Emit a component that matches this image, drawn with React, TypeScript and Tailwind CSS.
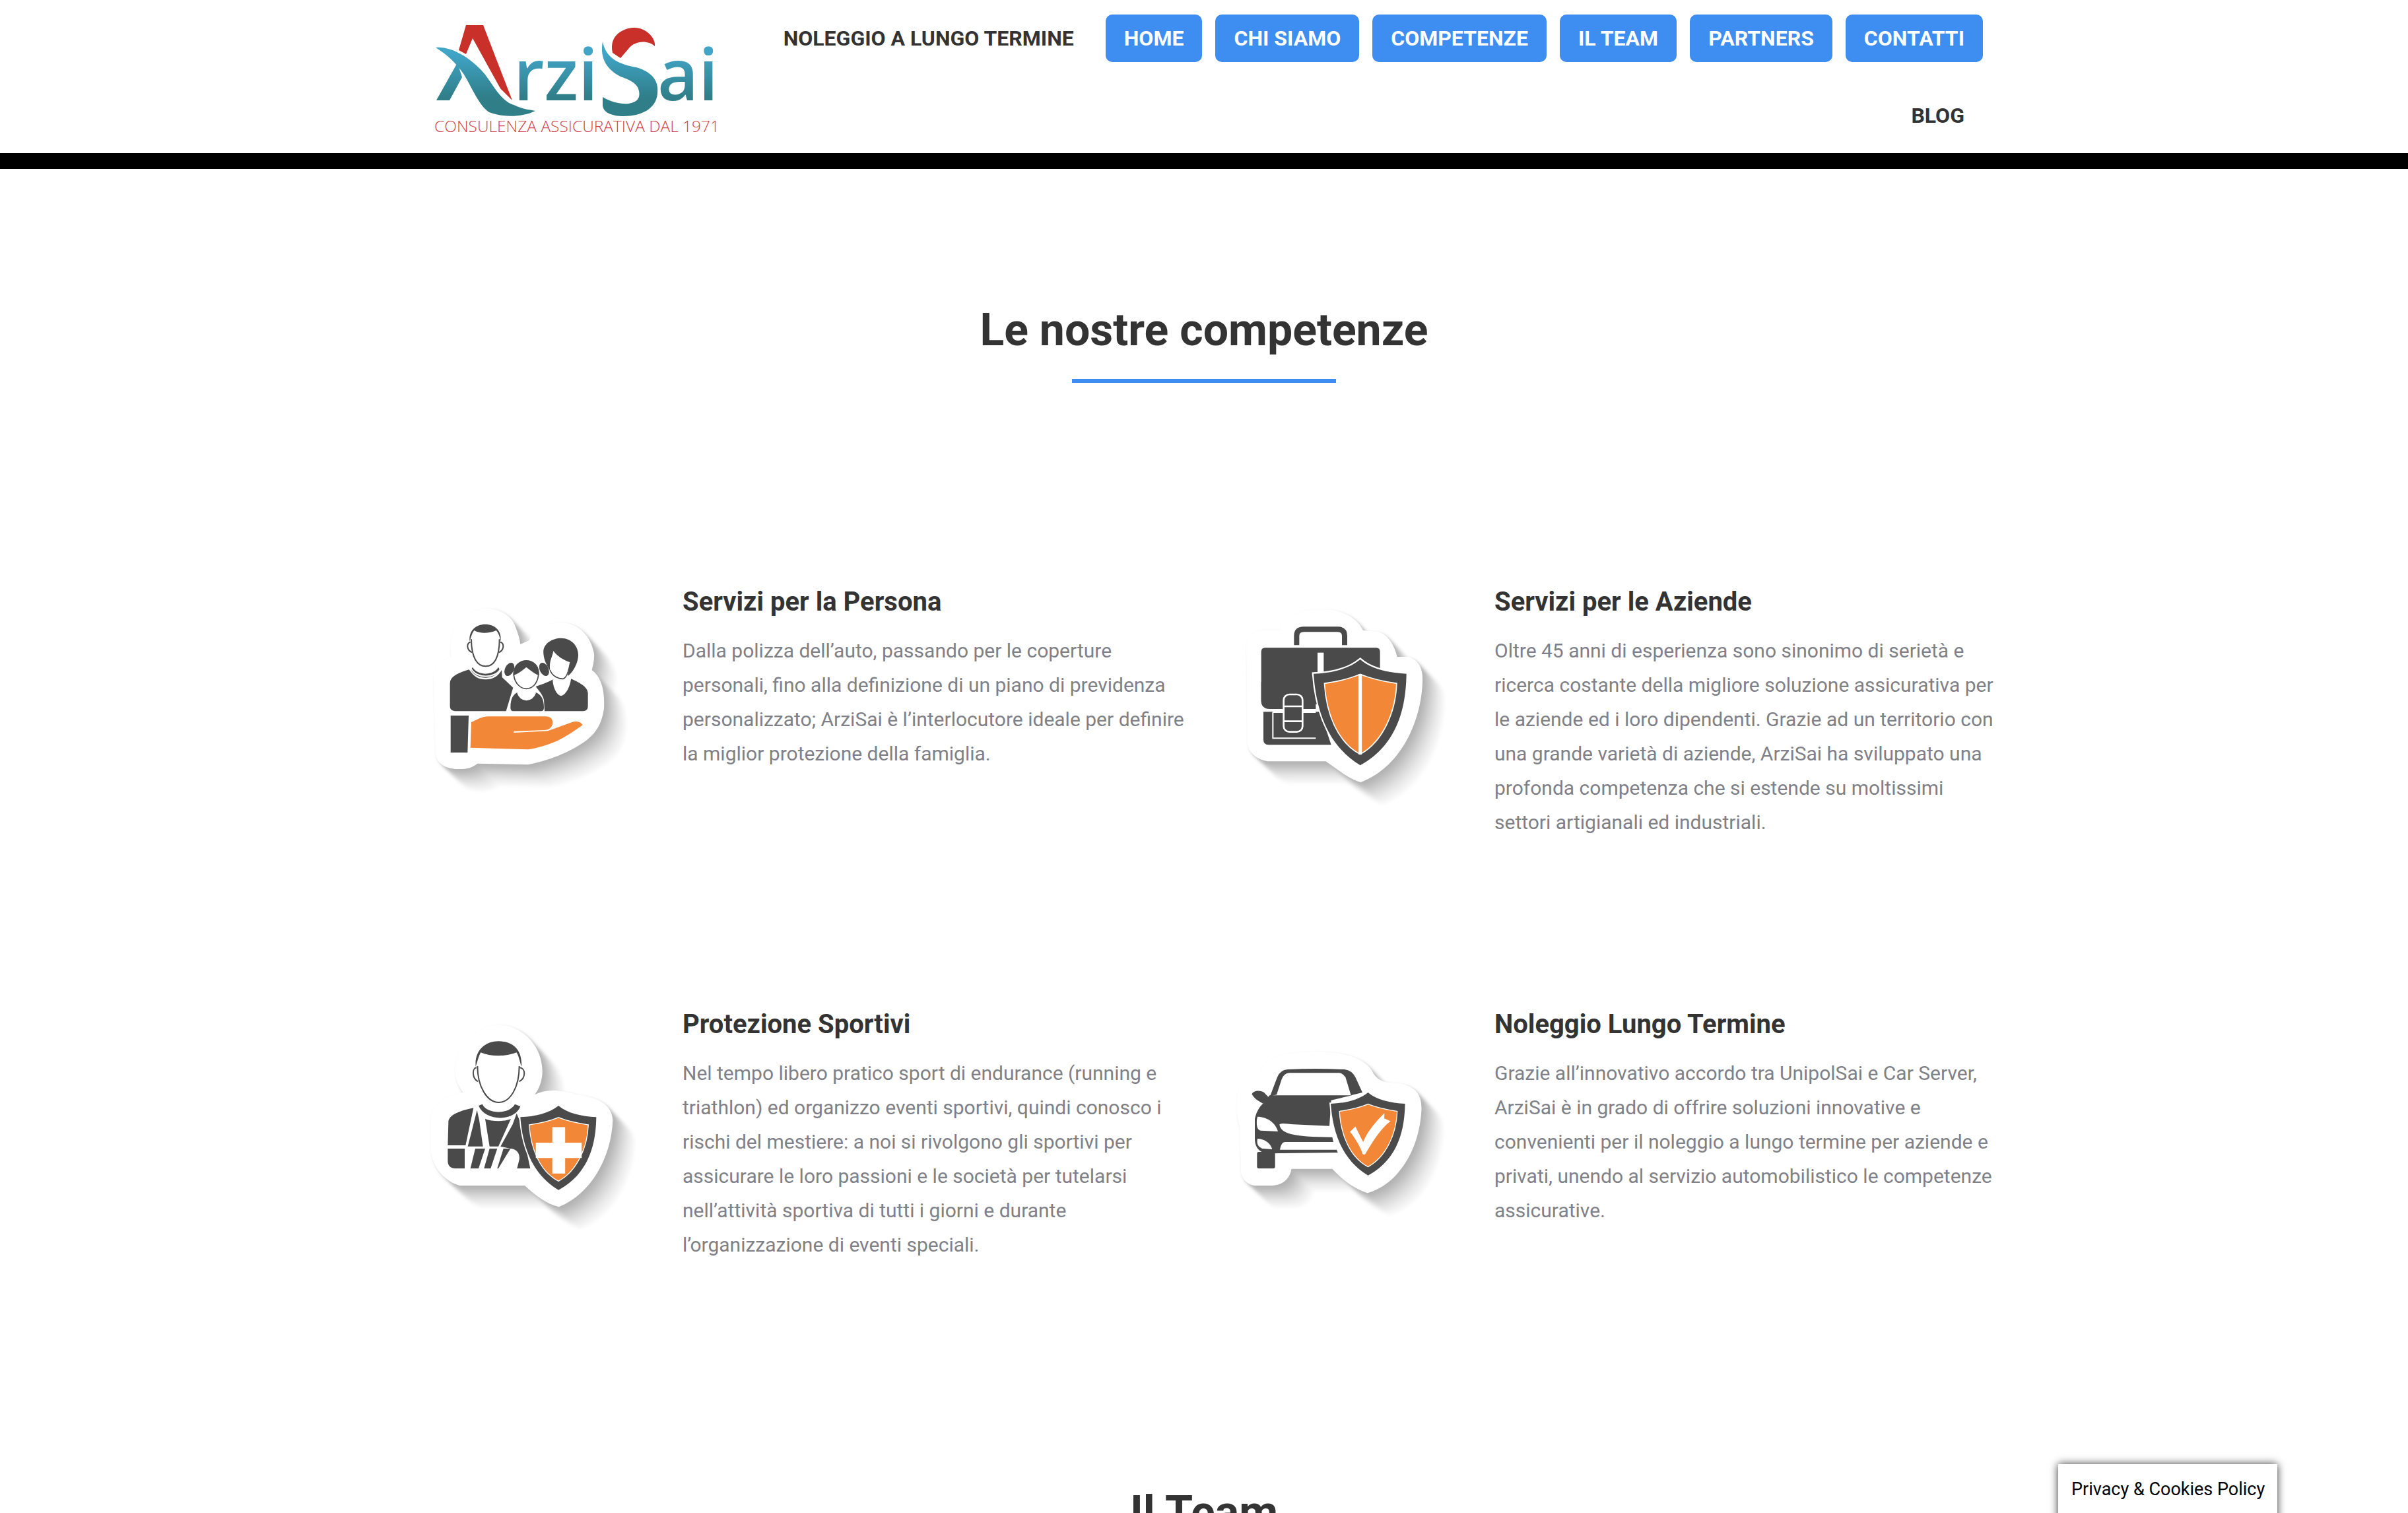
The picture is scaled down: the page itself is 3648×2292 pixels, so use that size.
import React from "react";

const DARK = "#4a4a4a";
const ORANGE = "#f28737";

const SHADOW_STEPS = [
  [100, "#f7f7f7"],
  [90, "#f2f2f2"],
  [80, "#ececec"],
  [70, "#e5e5e5"],
  [60, "#dedede"],
  [50, "#d6d6d6"],
  [40, "#cdcdcd"],
  [30, "#c4c4c4"],
  [20, "#bbbbbb"],
  [10, "#b3b3b3"],
] as const;

function Sticker({ blob, children, dx = 0 }: { blob: string; children: React.ReactNode; dx?: number }) {
  return (
    <svg width="394" height="330" viewBox={`${dx * 3} 0 1182 990`} className="block shrink-0 overflow-visible">
      <defs>
        <filter id="soft" x="-20%" y="-20%" width="140%" height="140%">
          <feGaussianBlur stdDeviation="8" />
        </filter>
      </defs>
      <g filter="url(#soft)">
        {SHADOW_STEPS.map(([o, c]) => (
          <path key={o} d={blob} fill={c} transform={`translate(${o} ${o})`} />
        ))}
      </g>
      <path d={blob} fill="#ffffff" />
      {children}
    </svg>
  );
}

function Shield({ x, y, sx, sy, divided, children }: { x: number; y: number; sx: number; sy: number; divided?: boolean; children?: React.ReactNode }) {
  return (
    <g transform={`translate(${x} ${y}) scale(${sx} ${sy})`}>
      <path d="M0,65 C80,63 160,43 212,0 C260,43 340,61 422,65 C420,203 390,383 212,481 C50,383 10,203 0,65Z" fill={DARK} stroke="#fff" strokeWidth="14" paintOrder="stroke" />
      <path d="M52,111 C110,103 170,88 212,70 C255,88 320,103 375,111 C370,243 310,373 212,428 C110,373 60,243 52,111Z" fill={ORANGE} stroke="#fff" strokeWidth="10" paintOrder="stroke" />
      {divided && <path d="M212,66 V432" stroke="#fff" strokeWidth="15" />}
      {children}
    </g>
  );
}

function FamilyIcon() {
  return (
    <Sticker blob="M60,720 L50,370 C60,325 90,300 132,285 C125,240 125,200 150,150 C180,95 240,65 300,65 C350,70 390,90 415,130 C430,165 442,200 445,228 L485,210 C510,160 570,130 640,130 C710,135 765,190 780,270 C782,300 775,325 770,345 C810,375 830,430 825,520 C815,590 790,630 745,665 C680,710 600,750 480,775 L250,770 C225,790 200,797 150,795 C90,790 62,760 60,720Z">
      <g fill={DARK}>
        <path d="M215,215 C208,165 245,137 285,137 C328,137 362,165 355,215 C352,195 345,175 335,165 C300,180 262,180 235,165 C225,178 220,195 215,215Z" />
        <path d="M222,205 C222,290 250,328 287,328 C325,328 350,290 350,205" fill="none" stroke={DARK} strokeWidth="6" />
        <path d="M218,218 C198,225 202,255 225,265 M354,218 C374,225 370,255 348,265" fill="none" stroke={DARK} strokeWidth="6" />
        <path d="M125,405 C125,375 160,358 212,343 C232,372 252,388 287,388 C322,388 345,372 360,345 L362,378 L412,425 L380,532 L148,532 Q125,530 125,510Z" />
        <path d="M228,332 C250,372 322,372 345,332 L352,345 C325,392 248,392 220,345Z" />
        <path d="M222,340 C245,385 330,385 355,340" fill="none" stroke="#fff" strokeWidth="6" />
        <ellipse cx="395" cy="342" rx="20" ry="32" transform="rotate(25 395 342)" />
        <ellipse cx="553" cy="342" rx="20" ry="32" transform="rotate(-25 553 342)" />
        <path d="M412,370 C410,325 440,300 472,300 C505,300 535,325 530,370 C505,360 490,345 472,332 C455,345 440,360 412,370Z" />
        <path d="M415,368 C420,410 450,430 472,430 C497,430 522,410 527,368" fill="none" stroke={DARK} strokeWidth="5" />
        <path d="M550,270 C545,225 590,200 630,200 C680,200 710,240 708,280 C706,320 680,360 660,372 L672,310 C640,300 610,280 595,258 C590,290 575,300 580,348 C565,325 552,300 550,270Z" />
        <path d="M580,345 C590,375 620,385 640,385 C655,380 665,350 672,310" fill="none" stroke={DARK} strokeWidth="5" />
        <path d="M515,420 C550,408 578,398 592,388 C592,420 610,462 630,462 C650,462 672,420 675,385 C705,398 752,420 752,450 L752,510 Q752,532 730,532 L555,532 L552,480 C545,455 530,440 515,420Z" />
        <path d="M400,515 C400,470 415,455 432,446 C445,492 500,492 514,446 C535,455 552,470 552,515 Q552,532 540,532 L412,532 Q400,532 400,515Z" />
        <path d="M432,448 C445,492 500,492 514,448" fill="none" stroke="#fff" strokeWidth="5" />
        <path d="M128,552 L210,552 L205,720 L128,720Z" />
      </g>
      <path d="M222,582 C250,570 270,556 300,556 L560,556 C590,556 595,580 590,595 C585,610 570,618 555,618 L415,623 L415,630 L570,622 L680,582 C700,575 720,580 728,595 C700,615 650,650 610,668 C570,685 520,700 480,706 L218,698Z" fill={ORANGE} />
    </Sticker>
  );
}

function CaseIcon() {
  return (
    <Sticker dx={10} blob="M90,670 L85,240 Q85,170 160,165 L235,165 C250,100 320,70 440,70 C520,70 590,110 615,165 L680,170 C730,180 760,240 770,285 L820,285 C870,300 888,340 885,400 C880,560 800,780 605,855 C550,840 490,790 445,760 L180,760 C130,750 90,720 90,670Z">
      <path d="M313,232 V190 Q313,160 345,160 H500 Q531,160 531,190 V232" fill="none" stroke={DARK} strokeWidth="24" />
      <path d="M170,244 H675 Q692,244 692,262 V500 H190 L175,519 Q152,510 152,490 V262 Q152,244 170,244Z" fill={DARK} />
      <path d="M152,480 Q152,522 190,522 L400,522 L400,400 L152,400Z" fill={DARK} />
      <path d="M162,535 H420 L470,685 H185 Q162,685 162,660Z" fill={DARK} />
      <rect x="408" y="266" width="28" height="90" fill="#fff" />
      <path d="M205,537 V655 H400" fill="none" stroke="#fff" strokeWidth="6" />
      <path d="M205,537 H252 M340,537 H400" fill="none" stroke="#fff" strokeWidth="6" />
      <rect x="254" y="456" width="86" height="170" rx="26" fill={DARK} stroke="#fff" strokeWidth="8" />
      <path d="M254,510 H340 M254,578 H340" stroke="#fff" strokeWidth="8" />
      <Shield x={390} y={297} sx={1} sy={1} divided />
    </Sticker>
  );
}

function SportIcon() {
  return (
    <Sticker blob="M150,250 C150,130 260,38 345,38 C450,38 545,130 545,250 C545,290 530,330 510,355 C560,330 620,330 700,355 C780,365 860,390 865,470 C860,620 780,800 620,865 C560,850 510,810 465,768 L170,768 C100,750 40,680 38,600 L38,450 C50,400 110,360 185,345 C160,310 150,285 150,250Z">
      <g fill={DARK}>
        <path d="M242,228 C235,150 290,112 345,112 C410,112 455,150 450,228 C442,205 437,175 427,163 C380,183 310,183 265,163 C255,180 250,205 242,228Z" />
        <path d="M250,225 C250,320 295,390 347,390 C400,390 440,320 440,225" fill="none" stroke={DARK} strokeWidth="6" />
        <path d="M245,232 C225,235 225,280 252,295 M442,232 C470,235 470,280 440,295" fill="none" stroke={DARK} strokeWidth="6" />
        <path d="M118,480 C118,450 160,430 232,415 L196,585 L115,585Z" />
        <path d="M115,600 H192 V690 H150 Q115,690 115,655Z" />
        <path d="M255,405 L272,398 C295,445 395,445 420,398 L445,408 C420,478 285,478 255,405Z" />
        <path d="M285,465 C320,478 370,478 402,465 L345,590 L305,590Z" />
        <path d="M248,425 L206,590 L275,590 L258,470Z" />
        <path d="M240,600 L285,600 L255,690 L218,690Z" />
        <path d="M305,600 L340,600 L310,690 L280,690Z" />
        <path d="M400,600 L345,690 L340,690 L368,600Z" />
        <path d="M410,490 L355,590 L400,600 C425,600 445,620 440,650 L430,690 L490,690 L445,480 L428,440Z" />
        <path d="M395,690 C410,670 405,630 400,605 L425,620 L435,640 L425,690Z" fill="#ffffff" />
      </g>
      <Shield x={445} y={405} sx={0.8175} sy={0.796}>
        <path d="M180,130 H250 V220 H340 V310 H250 V400 H180 V310 H90 V220 H180Z" fill="#fff" transform="translate(-6 -5) scale(1.02 .98)" />
      </Shield>
    </Sticker>
  );
}

function CarIcon() {
  return (
    <Sticker dx={10} blob="M60,700 L55,500 C30,420 30,300 120,262 L150,250 C170,190 260,160 400,160 C530,160 620,190 655,245 C670,280 700,295 730,300 L790,305 C850,320 885,350 880,430 C870,600 780,760 635,802 C570,780 520,740 475,692 L290,692 C280,740 250,765 200,768 L120,768 C80,760 60,730 60,700Z">
      <path d="M192,362 L225,275 Q238,243 272,240 Q400,234 530,240 Q565,245 580,275 L612,345 L560,358 L535,275 Q525,258 505,256 L280,256 Q255,258 245,285 L222,355Z" fill={DARK} />
      <path d="M190,358 H565 L470,380 L462,497 L300,490 C270,487 245,482 235,490 C240,530 290,548 475,548 L480,570 H262 C245,570 240,590 237,605 H495 L500,618 L180,622 C150,620 125,600 123,560 L123,465 C130,430 145,410 160,395Z" fill={DARK} />
      <path d="M110,352 C115,335 150,333 165,345 L187,368 L160,395 C140,385 118,372 110,352Z" fill={DARK} />
      <path d="M135,455 C170,455 215,475 228,522 L150,518 C135,515 130,500 132,470Z" fill="#fff" />
      <path d="M135,555 C165,555 195,575 202,603 L160,600 C140,595 130,580 135,555Z" fill="#fff" />
      <rect x="133" y="615" width="82" height="75" rx="8" fill={DARK} />
      <Shield x={468} y={345} sx={0.8} sy={0.784}>
        <path d="M109,228 L140,197 L184,287 C215,212 270,155 305,120 L304,150 L340,166 C285,205 235,290 194,360 L182,358 C170,320 140,265 109,228Z" fill="#fff" />
      </Shield>
    </Sticker>
  );
}

function Logo() {
  return (
    <svg width="440" height="180" viewBox="0 0 440 180" className="block shrink-0">
      <defs>
        <linearGradient id="logoBlue" gradientUnits="userSpaceOnUse" x1="0" y1="50" x2="0" y2="118">
          <stop offset="0" stopColor="#41a5c8" />
          <stop offset="1" stopColor="#2f7e88" />
        </linearGradient>
      </defs>
      <path d="M50,8 L76,8 L120,122 L102,104 L60,28 L50,52 L39,46Z" fill="#c9302a" />
      <path d="M4,42 C30,40 60,60 79,83 C95,105 105,125 125,130 C135,135 145,136 155,138 C135,148 105,148 85,140 C70,130 60,105 47,83 C35,65 20,52 4,42Z" fill="url(#logoBlue)" />
      <path d="M5,122 L37,65 L44,87 L25,122Z" fill="url(#logoBlue)" />
      <text x="122" y="122" textLength="128" lengthAdjust="spacingAndGlyphs" fontFamily="'Open Sans', sans-serif" fontWeight="600" fontSize="108" fill="url(#logoBlue)">rzi</text>
      <path d="M272,50 C266,22 290,12 305,12 C325,12 338,30 336,40 C325,30 305,32 296,44 L284,58Z" fill="#c9302a" />
      <path d="M257,33 C262,60 285,68 308,72 C335,80 342,95 340,112 C338,135 315,146 289,146 C270,146 258,140 257,130 L257,117 C270,125 285,128 296,127 C310,125 314,118 312,108 C310,95 295,90 284,86 C265,76 252,60 257,33Z" fill="url(#logoBlue)" />
      <text x="340" y="122" textLength="92" lengthAdjust="spacingAndGlyphs" fontFamily="'Open Sans', sans-serif" fontWeight="600" fontSize="108" fill="url(#logoBlue)">ai</text>
      <text x="2" y="170" textLength="432" lengthAdjust="spacingAndGlyphs" fontFamily="'Open Sans', sans-serif" fontWeight="300" fontSize="23" fill="#cf3f47">CONSULENZA ASSICURATIVA DAL 1971</text>
    </svg>
  );
}

const NAV = ["HOME", "CHI SIAMO", "COMPETENZE", "IL TEAM", "PARTNERS", "CONTATTI"];

const CARDS: { title: string; body: string; icon: React.ReactNode }[] = [
  {
    title: "Servizi per la Persona",
    body: "Dalla polizza dell’auto, passando per le coperture personali, fino alla definizione di un piano di previdenza personalizzato; ArziSai è l’interlocutore ideale per definire la miglior protezione della famiglia.",
    icon: <FamilyIcon />,
  },
  {
    title: "Servizi per le Aziende",
    body: "Oltre 45 anni di esperienza sono sinonimo di serietà e ricerca costante della migliore soluzione assicurativa per le aziende ed i loro dipendenti. Grazie ad un territorio con una grande varietà di aziende, ArziSai ha sviluppato una profonda competenza che si estende su moltissimi settori artigianali ed industriali.",
    icon: <CaseIcon />,
  },
  {
    title: "Protezione Sportivi",
    body: "Nel tempo libero pratico sport di endurance (running e triathlon) ed organizzo eventi sportivi, quindi conosco i rischi del mestiere: a noi si rivolgono gli sportivi per assicurare le loro passioni e le società per tutelarsi nell’attività sportiva di tutti i giorni e durante l’organizzazione di eventi speciali.",
    icon: <SportIcon />,
  },
  {
    title: "Noleggio Lungo Termine",
    body: "Grazie all’innovativo accordo tra UnipolSai e Car Server, ArziSai è in grado di offrire soluzioni innovative e convenienti per il noleggio a lungo termine per aziende e privati, unendo al servizio automobilistico le competenze assicurative.",
    icon: <CarIcon />,
  },
];

export default function App() {
  return (
    <div className="relative h-[2292px] overflow-hidden bg-white font-['Roboto',sans-serif]">
      <header className="h-[256px] border-b-[24px] border-black">
        <div className="mx-auto flex w-[2400px] pl-[32px] pr-[20px]">
          <div className="pt-[30px]">
            <Logo />
          </div>
          <nav className="flex flex-1 flex-wrap justify-end gap-x-[20px] gap-y-[45px] pt-[22px] text-[32px] leading-[72px] font-bold text-[#333333]">
            <a className="px-[28px]">NOLEGGIO A LUNGO TERMINE</a>
            {NAV.map((n) => (
              <a key={n} className="rounded-[10px] bg-[#3e8df0] px-[28px] text-white">
                {n}
              </a>
            ))}
            <a className="px-[28px]">BLOG</a>
          </nav>
        </div>
      </header>
      <main className="mx-auto w-[2400px]">
        <h2 className="pt-[204px] text-center text-[68px] leading-[80px] font-bold text-[#333333]">Le nostre competenze</h2>
        <div className="mx-auto mt-[34px] h-[6px] w-[400px] bg-[#3e8df0]" />
        <div className="mt-[302px] grid auto-rows-[640px] grid-cols-[1230px_1fr] pl-[16px]">
          {CARDS.map((c) => (
            <article key={c.title} className="flex">
              <div className="pt-[18px]">{c.icon}</div>
              <div className="w-[770px]">
                <h3 className="pt-[4px] text-[40px] leading-[52px] font-bold text-[#333333]">{c.title}</h3>
                <p className="mt-[22px] text-[30px] leading-[52px] text-[#7f8187]">{c.body}</p>
              </div>
            </article>
          ))}
        </div>
        <h2 className="mt-[89px] text-center text-[68px] leading-[80px] font-bold text-[#333333]">Il Team</h2>
      </main>
      <div className="absolute top-[2218px] left-[3118px] h-[120px] w-[332px] bg-white pt-[20px] pl-[20px] text-[27px] leading-[36px] text-black shadow-[0_0_12px_rgba(0,0,0,0.8)]">
        Privacy &amp; Cookies Policy
      </div>
    </div>
  );
}
